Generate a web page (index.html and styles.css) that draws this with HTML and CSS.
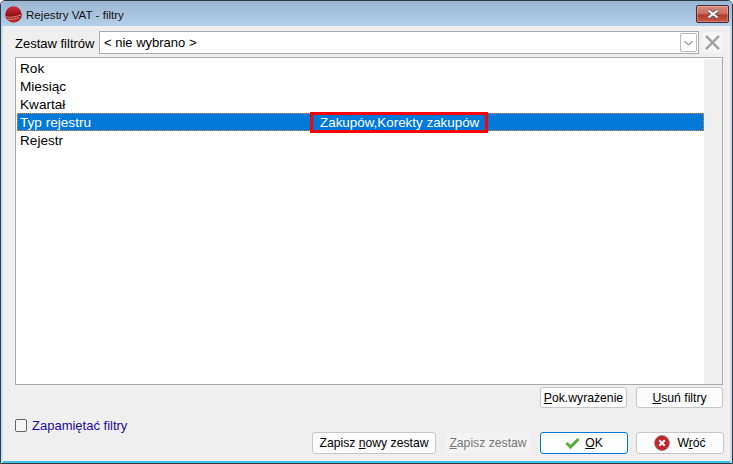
FILE: index.html
```html
<!DOCTYPE html>
<html lang="pl">
<head>
<meta charset="utf-8">
<title>Rejestry VAT - filtry</title>
<link rel="stylesheet" href="styles.css">
</head>
<body>
<div class="window">
  <header class="titlebar">
    <svg class="app-icon" width="17" height="17" viewBox="0 0 16 16"><defs><linearGradient id="g" x1="0" y1="0" x2="0" y2="1"><stop offset="0" stop-color="#d0303a"/><stop offset=".6" stop-color="#8e0f14"/><stop offset="1" stop-color="#c9342c"/></linearGradient></defs><circle cx="8" cy="8" r="7.800" fill="url(#g)"/><path d="M1 10c4 1.500 9 0 14-1.500M2 12.500c4 .5 8-.5 11.500-1.500" stroke="#e8a09a" stroke-width=".8" fill="none"/></svg>
    <span class="title">Rejestry VAT - filtry</span>
    <div class="close"><svg width="14" height="10" viewBox="0 0 14 10"><path d="M2.500 1.500 L11.500 8.500 M11.500 1.500 L2.500 8.500" stroke="#555" stroke-width="3.600"/><path d="M2.500 1.500 L11.500 8.500 M11.500 1.500 L2.500 8.500" stroke="#fff" stroke-width="2.200"/></svg></div>
  </header>
  <main class="content">
    <div class="filter-row">
      <label class="filter-label">Zestaw filtrów</label>
      <div class="combo">
        <span class="combo-text">&lt; nie wybrano &gt;</span>
        <span class="combo-btn"><svg width="9" height="6" viewBox="0 0 9 6"><path d="M.5 1 L4.500 5 L8.500 1" stroke="#555" fill="none"/></svg></span>
      </div>
      <div class="clear-btn"><svg width="15" height="15" viewBox="0 0 16 16"><path d="M1 1 L15 15 M15 1 L1 15" stroke="#a2a2a2" stroke-width="2.600"/></svg></div>
    </div>
    <div class="list">
      <div class="rows">
        <div class="row">Rok</div>
        <div class="row">Miesiąc</div>
        <div class="row">Kwartał</div>
        <div class="row selected"><span class="name">Typ rejestru</span><span class="value">Zakupów,Korekty zakupów</span><span class="redbox"></span></div>
        <div class="row">Rejestr</div>
      </div>
      <div class="scrollbar"></div>
    </div>
    <div class="actions-top">
      <button class="btn w87"><span><u>P</u>ok.wyrażenie</span></button>
      <button class="btn w87"><span><u>U</u>suń filtry</span></button>
    </div>
    <div class="bottom">
      <label class="remember"><span class="check"></span>Zapamiętać filtry</label>
      <div class="actions">
        <button class="btn w124"><span>Zapisz <u>n</u>owy zestaw</span></button>
        <button class="btn w88 disabled"><span><u>Z</u>apisz zestaw</span></button>
        <button class="btn w88 default"><svg width="15" height="12" viewBox="0 0 15 12"><path d="M1.500 6 L5.500 10 L13.500 2" stroke="#5aa83a" stroke-width="3" fill="none"/></svg><span><u>O</u>K</span></button>
        <button class="btn w88 back"><svg width="16" height="16" viewBox="0 0 16 16"><circle cx="8" cy="8" r="7.500" fill="#c4242c"/><circle cx="8" cy="8" r="7.500" fill="none" stroke="#8b8b8b" stroke-width=".8"/><path d="M5.200 5.200 L10.800 10.800 M10.800 5.200 L5.200 10.800" stroke="#fff" stroke-width="2"/></svg><span>W<u>r</u>óć</span></button>
      </div>
    </div>
  </main>
</div>
</body>
</html>
```
FILE: styles.css
```css
* { box-sizing: border-box; }
html, body { margin: 0; padding: 0; }
body { width: 733px; height: 464px; overflow: hidden; font-family: "Liberation Sans", Arial, sans-serif; font-size: 13px; color: #000; }
.window { width: 733px; height: 464px; display: flex; flex-direction: column; background: #bfe0f5; border: 1px solid #2c3a44; border-radius: 5px 5px 0 0; overflow: hidden; }
.titlebar { height: 25px; flex: none; display: flex; align-items: center; padding: 1px 3px 0 4px; background: linear-gradient(#9bb6d2, #b4cfe8); }
.app-icon { flex: none; margin-right: 4px; }
.title { flex: 1; font-size: 11.600px; color: #111; }
.close { width: 33px; height: 18px; border: 1px solid #4a2a35; border-radius: 2px; background: linear-gradient(#d98a7c 0%, #c96a5e 50%, #b23a28 55%, #c45a44 100%); display: flex; align-items: center; justify-content: center; box-shadow: inset 0 0 0 1px rgba(255,255,255,.25); }
.content { flex: 1; margin: 0 2px 2px; background: #efefef; padding: 5px 7px 0 12px; display: flex; flex-direction: column; box-shadow: 0 2px 0 #3fbfe8; }
.filter-row { display: flex; align-items: center; height: 23px; margin-bottom: 3px; }
.filter-label { width: 84px; flex: none; padding-top: 2px; }
.combo { flex: 1; height: 23px; background: #fff; border: 1px solid #aaa; display: flex; align-items: center; padding-left: 4px; justify-content: space-between; }
.combo-text { font-size: 13px; }
.combo-btn { width: 17px; height: 19px; margin-right: 1px; border: 1px solid #b8b8b8; border-radius: 2px; display: flex; align-items: center; justify-content: center; }
.clear-btn { width: 21px; height: 21px; margin-left: 3px; flex: none; background: #f5f5f5; border-radius: 3px; display: flex; align-items: center; justify-content: center; }
.list { height: 328px; flex: none; background: #fff; border: 1px solid #aaa; display: flex; padding: 1px 0 0 1px; }
.rows { flex: 1; }
.scrollbar { width: 18px; background: #efefef; flex: none; }
.row { height: 18px; line-height: 20px; padding-left: 3px; font-size: 13.600px; display: flex; }
.row.selected { background: #0078d7; color: #fff; outline: 1px dotted #e8913a; outline-offset: -1px; position: relative; }
.name { width: 300px; flex: none; }
.value { margin-left: -3px; padding-left: 3px; font-size: 13.400px; }
.redbox { position: absolute; left: 293px; top: -1px; width: 178px; height: 21px; border: 3px solid #f00; }
.actions-top { display: flex; justify-content: flex-end; gap: 9px; margin-top: 2px; height: 21px; flex: none; }
.bottom { display: flex; justify-content: space-between; align-items: flex-start; margin-top: 9px; }
.remember { display: flex; align-items: center; color: #1a0a9e; margin-top: -1px; height: 18px; }
.check { width: 12px; height: 13px; border: 1px solid #666; border-radius: 2px; background: #f5f5f5; margin-right: 5px; }
.actions { display: flex; gap: 8px; margin-top: 15px; margin-right: -1px; }
.btn { height: 22px; padding: 0; font: inherit; font-size: 12.200px; color: #000; background: #fbfbfb; border: 1px solid #c6c6c6; border-radius: 3px; display: flex; align-items: center; justify-content: center; gap: 5px; flex: none; }
.w87 { width: 87px; }
.w88 { width: 88px; }
.w124 { width: 124px; }
.actions-top .btn { height: 21px; }
.disabled { color: #777; background: #f3f3f3; border-color: #efefef; }
.default { border-color: #0078d7; background: #fdfdfd; }
.back { gap: 7px; }
```
